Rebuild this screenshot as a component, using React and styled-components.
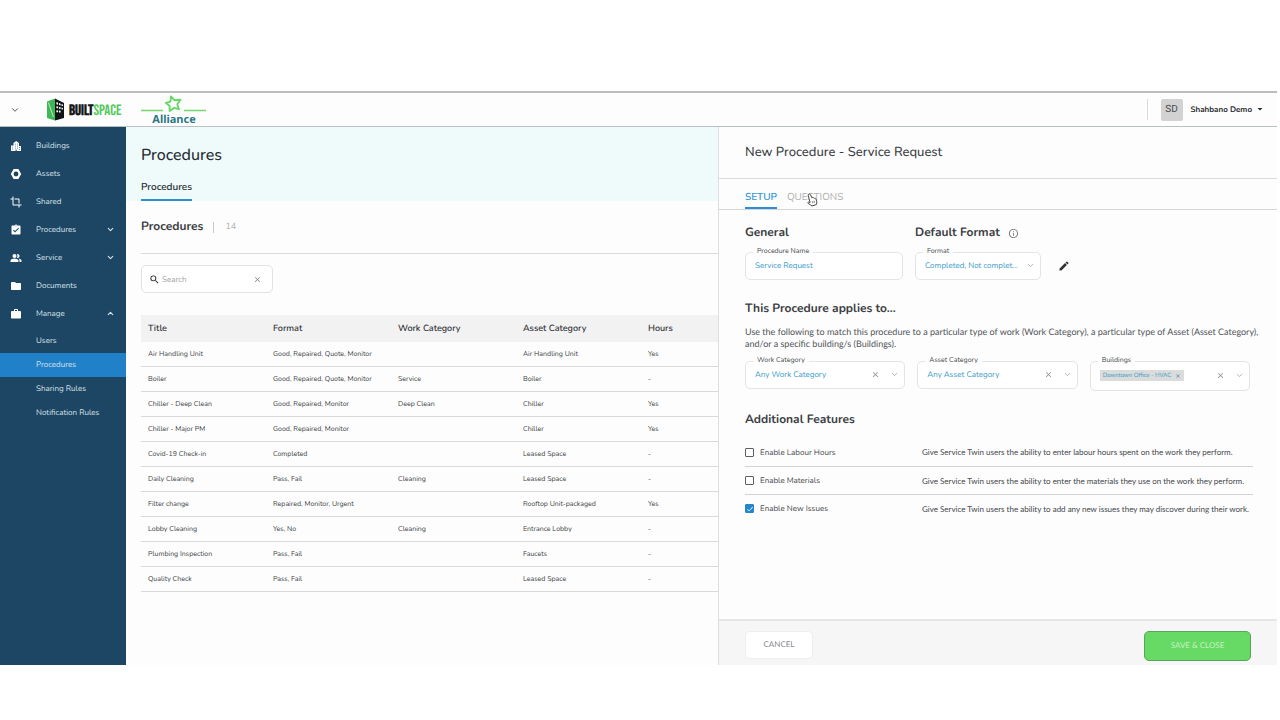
import React, { useState } from "react";
import styled, { createGlobalStyle, css } from "styled-components";
import {
  MdCrop,
  MdAssignmentTurnedIn,
  MdPeopleAlt,
  MdFolder,
  MdWork,
  MdSearch,
  MdEdit,
  MdClose,
  MdCheck,
  MdArrowDropDown,
  MdInfoOutline,
} from "react-icons/md";
import { FiChevronDown, FiChevronUp } from "react-icons/fi";

const GlobalStyle = createGlobalStyle`
  *, *::before, *::after { box-sizing: border-box; }
  body {
    margin: 0;
    background: #fff;
    color: #3c3f44;
    font-family: Nunito, Lato, "Open Sans", sans-serif;
    font-size: 9px;
    text-rendering: geometricPrecision;
  }
  button, input, select { font: inherit; color: inherit; text-rendering: inherit; }
  h1, h2, h3, p, ul { margin: 0; padding: 0; }
  ul { list-style: none; }
`;

const Page = styled.div`
  min-height: 100vh;
  padding: 91px 3px 55px 0;
  display: flex;
  flex-direction: column;
`;

const Shell = styled.div`
  flex: 1;
  display: flex;
  flex-direction: column;
  background: #fdfdfd;
`;

const TopBar = styled.header`
  height: 36px;
  flex: none;
  display: flex;
  align-items: center;
  padding: 0 11px 0 10px;
  border-top: 2px solid #bcbebe;
  border-bottom: 1px solid #b9c0c2;
`;

const PlainButton = styled.button`
  display: flex;
  align-items: center;
  justify-content: center;
  padding: 0;
  border: 0;
  background: none;
  color: ${(p) => p.$color || "#8d8f92"};
`;

const Brand = styled.a`
  width: 76px;
  display: flex;
  align-items: center;
  gap: 4px;
  margin-left: 27px;
  text-decoration: none;
  white-space: nowrap;
  color: #16191b;
  font-family: "Bebas Neue", "Roboto Condensed", "Liberation Sans Narrow", sans-serif;
  font-size: 15px;
  line-height: 16px;
`;

const BrandName = styled.span`
  padding-top: 3px;
`;

const BrandStrong = styled.strong`
  font-weight: 700;
`;

const BrandAccent = styled.span`
  color: #55c95c;
`;

const Partner = styled.div`
  width: 66px;
  margin: 4px 0 0 18px;
  display: flex;
  flex-direction: column;
  align-items: center;
  color: #2d7886;
  font-family: "Noto Sans", sans-serif;
  font-size: 11px;
  line-height: 16px;
  font-weight: 700;
`;

const Account = styled.div`
  margin-left: auto;
  padding-left: 13px;
  height: 21px;
  display: flex;
  align-items: center;
  border-left: 1px solid #d9dada;
`;

const Avatar = styled.span`
  width: 22px;
  height: 22px;
  margin-right: 8px;
  display: grid;
  place-items: center;
  border-radius: 2px;
  background: #d2d2d2;
  color: #4a4a4a;
  font-family: Roboto, sans-serif;
  font-size: 10px;
`;

const AccountButton = styled(PlainButton)`
  gap: 2px;
  padding-bottom: 1px;
  color: #26282b;
  font-size: 8px;
  font-weight: 700;
`;

const Columns = styled.div`
  flex: 1;
  display: grid;
  grid-template-columns: 126px minmax(0, 592fr) minmax(0, 559fr);
`;

const Sidebar = styled.nav`
  padding-top: 4px;
  background: #1c4663;
  color: #d8e2e9;
`;

const NavLink = styled.a`
  height: 28px;
  display: grid;
  grid-template-columns: 12px 1fr 10px;
  column-gap: 14px;
  align-items: center;
  padding: 0 10px;
  color: inherit;
  text-decoration: none;
  font-size: 8px;
`;

const NavIcon = styled.span`
  display: flex;
  margin-top: 2px;
  color: #fff;
  font-size: 12px;
`;

const SubList = styled.ul`
  padding-top: 2px;
`;

const SubLink = styled.a`
  height: 24px;
  display: flex;
  align-items: center;
  padding: 0 0 1px 36px;
  color: inherit;
  text-decoration: none;
  font-size: 8px;
  background: ${(p) => (p.$active ? "#2080c8" : "none")};
`;

const Main = styled.main`
  min-width: 0;
`;

const Band = styled.div`
  height: 74px;
  padding: 17px 15px 0;
  background: #effbfb;
`;

const PageTitle = styled.h1`
  color: #262d33;
  font-size: 16px;
  line-height: 22px;
  font-weight: 500;
`;

const PageTab = styled.a`
  display: inline-block;
  height: 21px;
  margin-top: 14px;
  border-bottom: 2px solid #2b8fd0;
  color: #262d33;
  font-size: 10px;
  line-height: 14px;
  font-weight: 600;
  text-decoration: none;
`;

const Listing = styled.section`
  padding-left: 15px;
`;

const ListingHead = styled.div`
  height: 53px;
  display: flex;
  align-items: center;
  border-bottom: 1px solid #dcdcdc;
`;

const SectionTitle = styled.h2`
  font-size: 12px;
  line-height: 16px;
  font-weight: 700;
`;

const Count = styled.span`
  margin-left: 10px;
  padding-left: 11px;
  border-left: 1px solid #c8c8c8;
  color: #b4b4b4;
  font-size: 9px;
  line-height: 11px;
`;

const SearchBox = styled.div`
  width: 132px;
  height: 28px;
  margin: 11px 0 22px;
  padding: 0 10px 0 7px;
  display: flex;
  align-items: center;
  gap: 2px;
  border: 1px solid #e2e2e2;
  border-radius: 5px;
  background: #fff;
`;

const SearchInput = styled.input`
  flex: 1;
  min-width: 0;
  padding: 0;
  border: 0;
  outline: 0;
  background: none;
  font-size: 8px;
  &::placeholder { color: #a2a2a2; opacity: 1; }
`;

const Table = styled.table`
  width: 100%;
  table-layout: fixed;
  border-collapse: separate;
  border-spacing: 0;
  text-align: left;
`;

const HeadCell = styled.th`
  width: ${(p) => (p.$last ? "auto" : "125px")};
  height: 27px;
  padding: 0 7px;
  background: #f2f2f2;
  color: #33363a;
  font-size: 9px;
  font-weight: 600;
`;

const Cell = styled.td`
  height: 25px;
  padding: 0 7px;
  border-bottom: 1px solid #dadada;
  color: #3c3f44;
  font-size: 7px;
  white-space: nowrap;
`;

const Drawer = styled.aside`
  display: flex;
  flex-direction: column;
  border-left: 1px solid #dedede;
`;

const DrawerTitle = styled.h2`
  height: 52px;
  display: flex;
  align-items: center;
  padding: 0 26px 2px;
  border-bottom: 1px solid #dcdcdc;
  font-size: 13px;
  font-weight: 500;
`;

const TabBar = styled.div`
  height: 31px;
  display: flex;
  gap: 10px;
  padding: 0 26px;
  border-bottom: 1px solid #d6d6d6;
`;

const Tab = styled.button`
  position: relative;
  padding: 7px 0 0;
  border: 0;
  border-bottom: 2px solid ${(p) => (p.$active ? "#2b8fd0" : "transparent")};
  background: none;
  color: ${(p) => (p.$active ? "#2f96d2" : "#b0b0b0")};
  font-size: 10px;
  font-weight: ${(p) => (p.$active ? 600 : 400)};
`;

const Pointer = styled.svg`
  position: absolute;
  left: 19px;
  top: 14px;
`;

const DrawerBody = styled.div`
  flex: 1;
  padding: 15px 24px 20px 26px;
`;

const TopFields = styled.div`
  display: grid;
  grid-template-columns: 158fr 338fr;
  column-gap: 12px;
`;

const HeadingRow = styled.div`
  display: flex;
  align-items: center;
  gap: 8px;
  margin-bottom: 11px;
  color: #77797c;
`;

const GroupTitle = styled.h3`
  color: #3c3f44;
  font-size: 12px;
  line-height: 16px;
  font-weight: 700;
`;

const FieldLine = styled.div`
  display: flex;
  align-items: center;
  gap: 17px;
`;

const FieldBox = styled.div`
  position: relative;
  width: ${(p) => p.$width || "100%"};
  height: ${(p) => (p.$tall ? "30px" : "28px")};
  display: flex;
  align-items: center;
  padding: 0 5px 1px 9px;
  border: 1px solid #e4e4e4;
  border-radius: 5px;
  background: #fff;
`;

const FieldLabel = styled.label`
  position: absolute;
  left: 7px;
  top: -6px;
  padding: 0 4px;
  background: #fdfdfd;
  color: #45484c;
  font-size: 7px;
  line-height: 10px;
`;

const controlText = css`
  flex: 1;
  min-width: 0;
  padding: 0;
  border: 0;
  outline: 0;
  background: none;
  color: #3a9ac9;
  font-size: 8px;
`;

const TextInput = styled.input`
  ${controlText}
`;

const Select = styled.select`
  ${controlText}
  appearance: none;
  overflow: hidden;
  text-overflow: ellipsis;
  white-space: nowrap;
`;

const FieldIcons = styled.div`
  display: flex;
  align-items: center;
  gap: 10px;
  margin-left: auto;
  padding-left: 7px;
  color: #9a9c9f;
`;

const Chip = styled.span`
  height: 11px;
  display: flex;
  align-items: center;
  gap: 4px;
  padding: 0 3px;
  background: #dadcdc;
  color: #4d9fc4;
  font-family: Lato, sans-serif;
  font-size: 6px;
  white-space: nowrap;
`;

const Help = styled.p`
  margin: 9px -16px 11px 0;
  color: #505357;
  font-family: Lato, sans-serif;
  font-size: 9px;
  line-height: 12px;
`;

const MatchFields = styled.div`
  display: grid;
  grid-template-columns: repeat(3, minmax(0, 1fr));
  column-gap: 12px;
  align-items: start;
  padding-right: 3px;
`;

const Block = styled.section`
  margin-top: 21px;
`;

const FeatureList = styled.ul`
  margin-top: 10px;
`;

const Feature = styled.li`
  height: 28px;
  display: grid;
  grid-template-columns: minmax(0, 177fr) minmax(0, 331fr);
  align-items: center;
  color: #45484c;
  font-size: 8px;
  white-space: nowrap;
  & + & { border-top: 1px solid #d2d2d2; }
`;

const FeatureText = styled.span`
  font-family: Lato, sans-serif;
`;

const CheckLabel = styled.label`
  display: flex;
  align-items: center;
  gap: 6px;
`;

const CheckWrap = styled.span`
  display: grid;
  place-items: center;
  color: #fff;
  & > * { grid-area: 1 / 1; }
  & > svg { pointer-events: none; }
`;

const Checkbox = styled.input`
  appearance: none;
  width: 9px;
  height: 9px;
  margin: 0;
  border: 1px solid #5c5f63;
  border-radius: 1px;
  background: #fff;
  &:checked { border-color: #2586cc; background: #2586cc; }
`;

const DrawerFooter = styled.footer`
  height: 46px;
  display: flex;
  align-items: flex-start;
  justify-content: space-between;
  padding: 10px 26px 0;
  border-top: 2px solid #e6e6e6;
  background: #f6f6f6;
`;

const ActionButton = styled.button`
  width: ${(p) => (p.$primary ? "107px" : "68px")};
  height: ${(p) => (p.$primary ? "30px" : "28px")};
  padding: 0 0 2px;
  border: 1px solid ${(p) => (p.$primary ? "#5ba35a" : "#eeeeee")};
  border-radius: 5px;
  background: ${(p) => (p.$primary ? "#66da64" : "#fff")};
  color: ${(p) => (p.$primary ? "#c5f5c0" : "#85878a")};
  font-family: Lato, sans-serif;
  font-size: 8px;
`;

const BuildingsIcon = () => (
  <svg width="12" height="12" viewBox="0 0 12 12">
    <path
      fill="#fff"
      fillRule="evenodd"
      d="M1 5.500h2.500V3L6.200 1 9 3v3h2v5H1zM2.200 6.800v.8h.8v-.8zm0 2v.8h.8v-.8zM4.900 3.800v.8h.8v-.8zm0 2v.8h.8v-.8zm0 2v.8h.8v-.8zM7 3.800v.8h.8v-.8zm0 2v.8h.8v-.8zm0 2v.8h.8v-.8zM5.600 9.600V11h1V9.600zM9.300 7.300v.8h.8v-.8zm0 2v.8h.8v-.8z"
    />
  </svg>
);

const HexIcon = () => (
  <svg width="12" height="12" viewBox="0 0 12 12">
    <path
      fill="#fff"
      fillRule="evenodd"
      d="M3.6 1h4.800L11.2 6 8.400 11H3.600L.8 6zM6 3.600A2.400 2.400 0 1 0 6 8.400 2.400 2.400 0 1 0 6 3.600z"
    />
  </svg>
);

const BrandMark = () => (
  <svg width="18" height="23" viewBox="0 0 18 23" aria-hidden="true">
    <path d="M0 3.500 8 .5v22L0 20z" fill="#3fb756" />
    <path d="M1.400 4.500 6.400 19" stroke="#d8f5dc" strokeWidth=".8" />
    <path d="M8 .5 17 5v15l-9 2.500z" fill="#111416" />
    <g fill="#fff">
      <path d="M9.400 4.100l1.700.7v1.900l-1.700-.5zM12 5l1.600.7v1.800L12 7zM14.500 6l1.400.6v1.700l-1.400-.5z" />
      <path d="M9.400 8.200l1.700.4v1.800l-1.700-.3zM12 8.900l1.600.4V11l-1.600-.3zM14.500 9.600l1.400.3v1.600l-1.400-.2z" />
      <path d="M9.400 12.200l1.700.2v1.800H9.400zM12 12.600l1.600.2v1.600H12z" />
    </g>
  </svg>
);

const PartnerMark = () => (
  <svg width="66" height="17" viewBox="0 0 66 17" aria-hidden="true">
    <path d="M0 15.500H22M43 15.500H65" stroke="#73d86d" strokeWidth="1.4" />
    <path
      d="M30 1.500L33.600 5.300L39.500 4.600L36.300 9.200L38 14.200L33.100 12.900L28.600 16L28.600 10.900L24.800 7.800L29.400 6.600z"
      fill="none"
      stroke="#67d766"
      strokeWidth="1.900"
      strokeLinejoin="round"
    />
  </svg>
);

const HandPointer = () => (
  <Pointer width="12" height="14" viewBox="0 0 12 14" aria-hidden="true">
    <path
      d="M3 1.200c.9-.4 1.500.1 1.700.8l1 2.700c.5-.4 1.100-.2 1.400.3.500-.4 1.100-.2 1.400.3.600-.3 1.200 0 1.400.6l.8 2.300c.3 1.300 0 2.200-.3 3.300L6 13c-1-1-2.400-1.500-3.800-2.600-.8-.7-.3-1.500.6-1.300l1.300.4L2.200 2.500c-.2-.6.200-1.100.8-1.300z"
      fill="#fff"
      stroke="#4a4a4a"
      strokeWidth="1"
      strokeLinejoin="round"
    />
    <path d="M6.300 8.200l.7 2M8 7.700l.6 2" stroke="#4a4a4a" strokeWidth=".7" />
  </Pointer>
);

const NAV = [
  { label: "Buildings", icon: <BuildingsIcon /> },
  { label: "Assets", icon: <HexIcon /> },
  { label: "Shared", icon: <MdCrop /> },
  { label: "Procedures", icon: <MdAssignmentTurnedIn />, arrow: <FiChevronDown size={9} strokeWidth={3} /> },
  { label: "Service", icon: <MdPeopleAlt />, arrow: <FiChevronDown size={9} strokeWidth={3} /> },
  { label: "Documents", icon: <MdFolder /> },
  { label: "Manage", icon: <MdWork />, arrow: <FiChevronUp size={9} strokeWidth={3} /> },
];

const SUB_NAV = ["Users", "Procedures", "Sharing Rules", "Notification Rules"];

const HEADINGS = ["Title", "Format", "Work Category", "Asset Category", "Hours"];

const ROWS = [
  ["Air Handling Unit", "Good, Repaired, Quote, Monitor", "", "Air Handling Unit", "Yes"],
  ["Boiler", "Good, Repaired, Quote, Monitor", "Service", "Boiler", "-"],
  ["Chiller - Deep Clean", "Good, Repaired, Monitor", "Deep Clean", "Chiller", "Yes"],
  ["Chiller - Major PM", "Good, Repaired, Monitor", "", "Chiller", "Yes"],
  ["Covid-19 Check-in", "Completed", "", "Leased Space", "-"],
  ["Daily Cleaning", "Pass, Fail", "Cleaning", "Leased Space", "-"],
  ["Filter change", "Repaired, Monitor, Urgent", "", "Rooftop Unit-packaged", "Yes"],
  ["Lobby Cleaning", "Yes, No", "Cleaning", "Entrance Lobby", "-"],
  ["Plumbing Inspection", "Pass, Fail", "", "Faucets", "-"],
  ["Quality Check", "Pass, Fail", "", "Leased Space", "-"],
];

const FEATURES = [
  ["Enable Labour Hours", "Give Service Twin users the ability to enter labour hours spent on the work they perform."],
  ["Enable Materials", "Give Service Twin users the ability to enter the materials they use on the work they perform."],
  ["Enable New Issues", "Give Service Twin users the ability to add any new issues they may discover during their work."],
];

function SelectField({ id, label, value, clearable, width }) {
  return (
    <FieldBox $width={width}>
      <FieldLabel htmlFor={id}>{label}</FieldLabel>
      <Select id={id} defaultValue={value}>
        <option>{value}</option>
      </Select>
      <FieldIcons>
        {clearable && (
          <PlainButton aria-label={`Clear ${label}`}>
            <MdClose size={9} />
          </PlainButton>
        )}
        <FiChevronDown size={9} />
      </FieldIcons>
    </FieldBox>
  );
}

function FeatureRow({ label, text, checked, onToggle }) {
  return (
    <Feature>
      <CheckLabel>
        <CheckWrap>
          <Checkbox type="checkbox" checked={checked} onChange={onToggle} />
          {checked && <MdCheck size={8} />}
        </CheckWrap>
        {label}
      </CheckLabel>
      <FeatureText>{text}</FeatureText>
    </Feature>
  );
}

export default function App() {
  const [enabled, setEnabled] = useState([false, false, true]);
  const toggle = (i) => setEnabled(enabled.map((v, n) => (n === i ? !v : v)));

  return (
    <Page>
      <GlobalStyle />
      <Shell>
        <TopBar>
          <PlainButton aria-label="Toggle menu" $color="#333">
            <FiChevronDown size={10} />
          </PlainButton>
          <Brand href="#home">
            <BrandMark />
            <BrandName>
              <BrandStrong>BUILT</BrandStrong>
              <BrandAccent>SPACE</BrandAccent>
            </BrandName>
          </Brand>
          <Partner>
            <PartnerMark />
            Alliance
          </Partner>
          <Account>
            <Avatar>SD</Avatar>
            <AccountButton>
              Shahbano Demo
              <MdArrowDropDown size={12} />
            </AccountButton>
          </Account>
        </TopBar>

        <Columns>
          <Sidebar>
            <ul>
              {NAV.map((item) => (
                <li key={item.label}>
                  <NavLink href="#nav">
                    <NavIcon>{item.icon}</NavIcon>
                    {item.label}
                    {item.arrow}
                  </NavLink>
                </li>
              ))}
            </ul>
            <SubList>
              {SUB_NAV.map((label) => (
                <li key={label}>
                  <SubLink href="#manage" $active={label === "Procedures"}>
                    {label}
                  </SubLink>
                </li>
              ))}
            </SubList>
          </Sidebar>

          <Main>
            <Band>
              <PageTitle>Procedures</PageTitle>
              <PageTab href="#procedures">Procedures</PageTab>
            </Band>
            <Listing>
              <ListingHead>
                <SectionTitle>Procedures</SectionTitle>
                <Count>14</Count>
              </ListingHead>
              <SearchBox>
                <MdSearch size={11} color="#222" />
                <SearchInput aria-label="Search" placeholder="Search" />
                <PlainButton aria-label="Clear search">
                  <MdClose size={9} />
                </PlainButton>
              </SearchBox>
              <Table>
                <thead>
                  <tr>
                    {HEADINGS.map((h, i) => (
                      <HeadCell key={h} $last={i === HEADINGS.length - 1}>
                        {h}
                      </HeadCell>
                    ))}
                  </tr>
                </thead>
                <tbody>
                  {ROWS.map((row) => (
                    <tr key={row[0]}>
                      {row.map((value, i) => (
                        <Cell key={HEADINGS[i]}>{value}</Cell>
                      ))}
                    </tr>
                  ))}
                </tbody>
              </Table>
            </Listing>
          </Main>

          <Drawer>
            <DrawerTitle>New Procedure - Service Request</DrawerTitle>
            <TabBar>
              <Tab $active>SETUP</Tab>
              <Tab>
                QUESTIONS
                <HandPointer />
              </Tab>
            </TabBar>
            <DrawerBody>
              <TopFields>
                <div>
                  <HeadingRow>
                    <GroupTitle>General</GroupTitle>
                  </HeadingRow>
                  <FieldBox>
                    <FieldLabel htmlFor="name">Procedure Name</FieldLabel>
                    <TextInput id="name" defaultValue="Service Request" />
                  </FieldBox>
                </div>
                <div>
                  <HeadingRow>
                    <GroupTitle>Default Format</GroupTitle>
                    <MdInfoOutline size={11} />
                  </HeadingRow>
                  <FieldLine>
                    <SelectField id="format" label="Format" value="Completed, Not completed, Not applicable" width="126px" />
                    <PlainButton aria-label="Edit format" $color="#2f3134">
                      <MdEdit size={12} />
                    </PlainButton>
                  </FieldLine>
                </div>
              </TopFields>

              <Block>
                <GroupTitle>This Procedure applies to...</GroupTitle>
                <Help>
                  Use the following to match this procedure to a particular type of work (Work Category), a particular
                  type of Asset (Asset Category), and/or a specific building/s (Buildings).
                </Help>
                <MatchFields>
                  <SelectField id="work" label="Work Category" value="Any Work Category" clearable />
                  <SelectField id="asset" label="Asset Category" value="Any Asset Category" clearable />
                  <FieldBox $tall>
                    <FieldLabel as="span">Buildings</FieldLabel>
                    <Chip>
                      Downtown Office - HVAC
                      <PlainButton aria-label="Remove Downtown Office - HVAC" $color="#23739f">
                        <MdClose size={6} />
                      </PlainButton>
                    </Chip>
                    <FieldIcons>
                      <PlainButton aria-label="Clear Buildings">
                        <MdClose size={9} />
                      </PlainButton>
                      <FiChevronDown size={9} />
                    </FieldIcons>
                  </FieldBox>
                </MatchFields>
              </Block>

              <Block>
                <GroupTitle>Additional Features</GroupTitle>
                <FeatureList>
                  {FEATURES.map(([label, text], i) => (
                    <FeatureRow key={label} label={label} text={text} checked={enabled[i]} onToggle={() => toggle(i)} />
                  ))}
                </FeatureList>
              </Block>
            </DrawerBody>
            <DrawerFooter>
              <ActionButton>CANCEL</ActionButton>
              <ActionButton $primary>SAVE &amp; CLOSE</ActionButton>
            </DrawerFooter>
          </Drawer>
        </Columns>
      </Shell>
    </Page>
  );
}
